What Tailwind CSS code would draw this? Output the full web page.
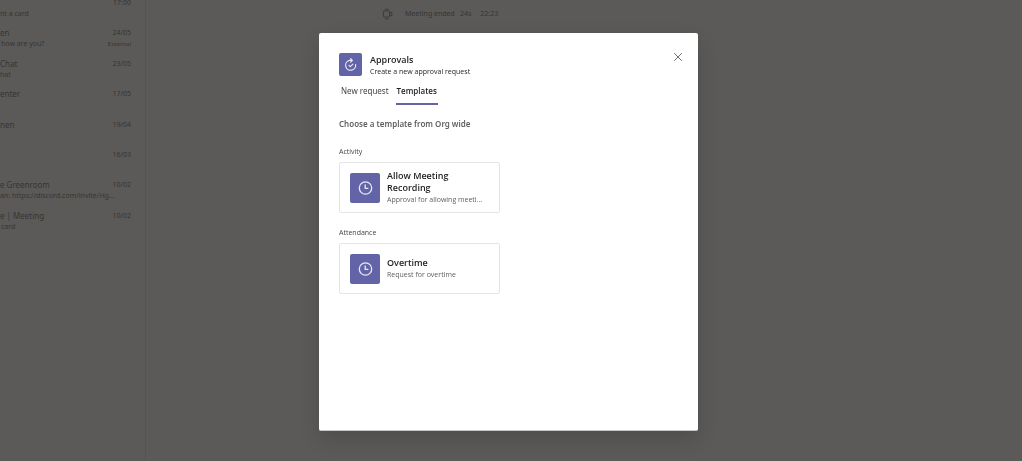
<!DOCTYPE html>
<html lang="en">
<head>
    <meta charset="UTF-8">
    <meta name="viewport" content="width=device-width, initial-scale=1.0">
    <title>Approvals</title>
    <script src="https://cdn.jsdelivr.net/npm/@tailwindcss/browser@4"></script>
</head>
<body class="bg-[#5b5a58] font-['Open_Sans','Noto_Sans',sans-serif] text-[#363534] h-screen overflow-hidden">

<div class="flex h-full">
    <!-- Chat list -->
    <aside class="w-[146px] shrink-0 border-r border-[#555452]">
        <ul class="grid grid-rows-8 h-[243px] -mt-[3px] pr-[14px] whitespace-nowrap text-[8px] leading-[12px] font-['Noto_Sans',sans-serif]">
            <li>
                <div class="flex justify-between"><span>&nbsp;</span><span class="text-[7px]">17:00</span></div>
                <p class="text-[7px] leading-[10px]">nt a card</p>
            </li>
            <li>
                <div class="flex justify-between"><span>en</span><span class="text-[7px]">24/05</span></div>
                <div class="flex justify-between text-[7px] leading-[10px]"><span class="pl-px">how are you?</span><span class="text-[6px]">External</span></div>
            </li>
            <li>
                <div class="flex justify-between"><span>Chat</span><span class="text-[7px]">23/05</span></div>
                <p class="text-[7px] leading-[10px]">hat</p>
            </li>
            <li>
                <div class="flex justify-between"><span>enter</span><span class="text-[7px]">17/05</span></div>
            </li>
            <li>
                <div class="flex justify-between"><span>nen</span><span class="text-[7px]">19/04</span></div>
            </li>
            <li>
                <div class="flex justify-between"><span>&nbsp;</span><span class="text-[7px]">16/03</span></div>
            </li>
            <li>
                <div class="flex justify-between"><span>e Greenroom</span><span class="text-[7px]">10/02</span></div>
                <p class="text-[7px] leading-[10px]">an: https://discord.com/invite/Hg...</p>
            </li>
            <li>
                <div class="flex justify-between"><span>e | Meeting</span><span class="text-[7px]">10/02</span></div>
                <p class="text-[7px] leading-[10px] pl-px">card</p>
            </li>
        </ul>
    </aside>

    <!-- Conversation -->
    <main class="flex-1 pl-[236px] pt-2">
        <div class="flex items-center text-[7px] leading-[12px] font-['Noto_Sans',sans-serif]">
            <svg class="w-3 h-3 mr-[11px]" viewBox="0 0 12 12" fill="none" stroke="currentColor" stroke-width=".8">
                <rect x="1.4" y="3" width="6.2" height="6" rx=".8"/>
                <path d="M7.6 5.2l2.2-1v3.8l-2.2-1M2.8 1.6q2-1.1 4 0M2.8 10.6q2 1.1 4 0"/>
            </svg>
            <span class="mr-[5px]">Meeting ended</span>
            <span class="mr-[9px]">24s</span>
            <span>22:23</span>
        </div>
    </main>
</div>

<!-- Modal -->
<div class="fixed inset-0 flex items-start justify-center pt-[33px] pb-[30px] pr-[5px]">
    <div role="dialog" aria-labelledby="modalTitle" class="relative w-[379px] max-w-full h-full bg-white rounded-xs border-b border-[#c8c8c8] shadow-[0_8px_20px_rgba(0,0,0,0.15)] px-5 pt-5 text-[#252423]">
        <button aria-label="Close" class="absolute top-[19px] right-[15px] text-[#616161]">
            <svg class="w-[10px] h-[10px]" viewBox="0 0 10 10" fill="none" stroke="currentColor" stroke-width=".9">
                <path d="M1.2 1.2l7.6 7.6M8.8 1.2L1.2 8.8"/>
            </svg>
        </button>

        <header class="flex gap-2">
            <span class="w-[23px] h-[23px] rounded-xs bg-[#6264a7] flex items-center justify-center">
                <svg class="w-[15px] h-[15px]" viewBox="0 0 15 15" fill="none" stroke="#e8e8f6" stroke-width="1.2" stroke-linecap="round" stroke-linejoin="round">
                    <path d="M12.6 7.6A5 5 0 1 1 6.4 3.4H9M7.6 1.6L9.4 3.4 7.6 5.2M6 8.4l1.3 1.3 2.6-2.6"/>
                </svg>
            </span>
            <div>
                <h1 id="modalTitle" class="text-[9px] leading-[13px] font-semibold">Approvals</h1>
                <p class="text-[7px] leading-[12px]">Create a new approval request</p>
            </div>
        </header>

        <div role="tablist" class="flex gap-[6px] mt-[7px] pl-px text-[8px] leading-[12px]">
            <button role="tab" aria-selected="false" class="px-px pb-[6px] border-b-2 border-transparent text-[#484644] font-['Noto_Sans',sans-serif]">New request</button>
            <button role="tab" aria-selected="true" class="px-px pb-[6px] border-b-2 border-[#6264a7] font-semibold">Templates</button>
        </div>

        <h2 class="mt-[13px] text-[8px] leading-[12px] font-semibold text-[#616161] font-['Noto_Sans',sans-serif]">Choose a template from Org wide</h2>

        <section class="mt-4">
            <h3 class="text-[7px] leading-[12px] text-[#484644]">Activity</h3>
            <button class="mt-1 w-[161px] h-[51px] flex items-center gap-[7px] px-[10px] text-left border border-[#e5e5e5] rounded-xs">
                <span class="w-[30px] h-[30px] shrink-0 rounded-xs bg-[#6264a7] flex items-center justify-center">
                    <svg class="w-[15px] h-[15px]" viewBox="0 0 15 15" fill="none" stroke="#e8e8f6" stroke-width="1.3" stroke-linecap="round" stroke-linejoin="round">
                        <circle cx="7.5" cy="8" r="6.2"/>
                        <path d="M7.2 4.8v3.6h2.6"/>
                    </svg>
                </span>
                <span class="min-w-0">
                    <span class="block text-[9px] leading-[12px] font-semibold">Allow Meeting Recording</span>
                    <span class="block text-[7px] leading-[12px] text-[#616161]">Approval for allowing meeti...</span>
                </span>
            </button>
        </section>

        <section class="mt-[14px]">
            <h3 class="text-[7px] leading-[12px] text-[#484644]">Attendance</h3>
            <button class="mt-1 w-[161px] h-[51px] flex items-center gap-[7px] px-[10px] text-left border border-[#e5e5e5] rounded-xs">
                <span class="w-[30px] h-[30px] shrink-0 rounded-xs bg-[#6264a7] flex items-center justify-center">
                    <svg class="w-[15px] h-[15px]" viewBox="0 0 15 15" fill="none" stroke="#e8e8f6" stroke-width="1.3" stroke-linecap="round" stroke-linejoin="round">
                        <circle cx="7.5" cy="8" r="6.2"/>
                        <path d="M7.2 4.8v3.6h2.6"/>
                    </svg>
                </span>
                <span class="min-w-0">
                    <span class="block text-[9px] leading-[12px] font-semibold">Overtime</span>
                    <span class="block text-[7px] leading-[12px] text-[#616161]">Request for overtime</span>
                </span>
            </button>
        </section>
    </div>
</div>

</body>
</html>
